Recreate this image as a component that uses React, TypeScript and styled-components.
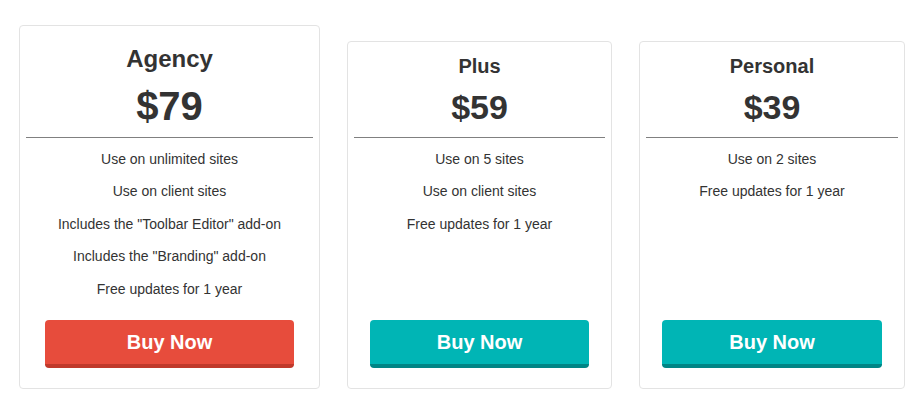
import React from "react";
import styled, { createGlobalStyle } from "styled-components";

const GlobalStyle = createGlobalStyle`
  html, body { margin: 0; padding: 0; background: #ffffff; }
  body { font-family: "Liberation Sans", Arial, sans-serif; color: #333333; }
`;

const Row = styled.div`
  display: flex;
  align-items: stretch;
  gap: 27px;
  padding: 25px 0 0 19px;
  height: 364px;
`;

const Card = styled.div<{ $featured?: boolean; $w: number }>`
  box-sizing: border-box;
  width: ${(p) => p.$w}px;
  margin-top: ${(p) => (p.$featured ? 0 : 16)}px;
  border: 1px solid #e3e3e3;
  border-radius: 4px;
  display: flex;
  flex-direction: column;
  align-items: center;
  padding-bottom: 20px;
`;

const Header = styled.div<{ $featured?: boolean }>`
  align-self: stretch;
  margin: 0 6px;
  padding-top: ${(p) => (p.$featured ? 19 : 12)}px;
  border-bottom: 1px solid #808080;
  text-align: center;
`;

const Title = styled.div<{ $featured?: boolean }>`
  font-size: ${(p) => (p.$featured ? 24 : 20)}px;
  line-height: 1.2;
  font-weight: 700;
  color: #333333;
`;

const Price = styled.div<{ $featured?: boolean }>`
  font-size: ${(p) => (p.$featured ? 40 : 34)}px;
  line-height: 1.2;
  font-weight: 700;
  color: #333333;
  margin-top: ${(p) => (p.$featured ? 8 : 9)}px;
  margin-bottom: ${(p) => (p.$featured ? 7 : 9)}px;
`;

const Features = styled.ul`
  list-style: none;
  margin: 0;
  padding: 5px 0 0;
  text-align: center;
`;

const Feature = styled.li`
  font-size: 14px;
  line-height: 32.5px;
  color: #333333;
`;

const BuyButton = styled.button<{ $color: string; $shade: string }>`
  margin-top: auto;
  box-sizing: border-box;
  width: 83.5%;
  height: 48px;
  border: none;
  border-bottom: 4px solid ${(p) => p.$shade};
  border-radius: 4px;
  background: ${(p) => p.$color};
  color: #ffffff;
  font-family: "Liberation Sans", Arial, sans-serif;
  font-size: 20px;
  font-weight: 700;
  cursor: pointer;
  padding: 0;
`;

type Plan = {
  name: string;
  price: string;
  features: string[];
  featured?: boolean;
  width: number;
  color: string;
  shade: string;
};

const plans: Plan[] = [
  {
    name: "Agency",
    price: "$79",
    featured: true,
    width: 301,
    color: "#e74c3c",
    shade: "#c0392b",
    features: [
      "Use on unlimited sites",
      "Use on client sites",
      'Includes the "Toolbar Editor" add-on',
      'Includes the "Branding" add-on',
      "Free updates for 1 year",
    ],
  },
  {
    name: "Plus",
    price: "$59",
    width: 265,
    color: "#00b5b5",
    shade: "#008585",
    features: ["Use on 5 sites", "Use on client sites", "Free updates for 1 year"],
  },
  {
    name: "Personal",
    price: "$39",
    width: 266,
    color: "#00b5b5",
    shade: "#008585",
    features: ["Use on 2 sites", "Free updates for 1 year"],
  },
];

export default function App() {
  return (
    <>
      <GlobalStyle />
      <Row>
        {plans.map((p) => (
          <Card key={p.name} $featured={p.featured} $w={p.width}>
            <Header $featured={p.featured}>
              <Title $featured={p.featured}>{p.name}</Title>
              <Price $featured={p.featured}>{p.price}</Price>
            </Header>
            <Features>
              {p.features.map((f) => (
                <Feature key={f}>{f}</Feature>
              ))}
            </Features>
            <BuyButton $color={p.color} $shade={p.shade}>
              Buy Now
            </BuyButton>
          </Card>
        ))}
      </Row>
    </>
  );
}
